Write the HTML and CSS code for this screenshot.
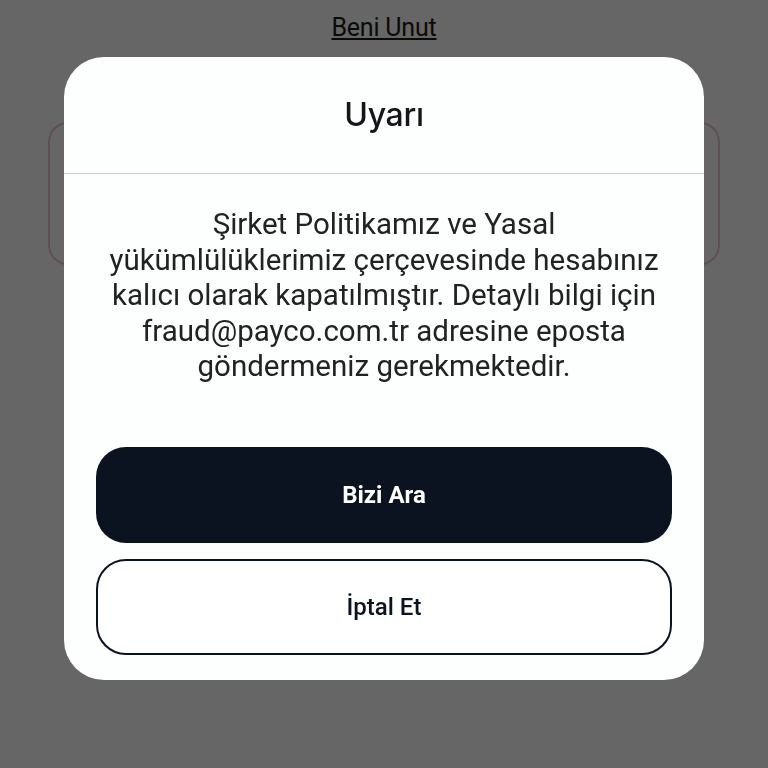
FILE: index.html
```html
<!DOCTYPE html>
<html lang="tr">

<head>
    <meta charset="UTF-8">
    <meta name="viewport" content="width=device-width, initial-scale=1.0">
    <title>Uyarı</title>
    <link rel="stylesheet" href="styles.css">
</head>

<body>

    <div class="page">
        <a class="forget" href="#">Beni Unut</a>
        <div class="card"></div>
    </div>

    <div class="overlay">
        <div class="modal">
            <div class="modal-head">
                <h2>Uyarı</h2>
            </div>
            <div class="modal-body">
                <p>Şirket Politikamız ve Yasal yükümlülüklerimiz çerçevesinde hesabınız kalıcı olarak kapatılmıştır. Detaylı bilgi için fraud@payco.com.tr adresine eposta göndermeniz gerekmektedir.</p>
                <div class="actions">
                    <button class="btn primary">Bizi Ara</button>
                    <button class="btn outline">İptal Et</button>
                </div>
            </div>
        </div>
    </div>

</body>

</html>
```

FILE: styles.css
```css
* {
    box-sizing: border-box;
}

html,
body {
    margin: 0;
    background-color: #fff;
    font-family: "Roboto", "Arial", sans-serif;
}

.page {
    display: flex;
    flex-direction: column;
    align-items: center;
    padding: 12px 48px 0;
}

.forget {
    color: #1a1a1a;
    font-size: 25px;
    line-height: 32px;
    letter-spacing: -0.2px;
    text-decoration: underline;
}

.card {
    width: 100%;
    height: 143px;
    margin-top: 78px;
    border: 2px solid #ecc8c8;
    border-radius: 20px;
}

.overlay {
    position: fixed;
    inset: 0;
    background-color: rgba(0, 0, 0, 0.6);
    display: flex;
    justify-content: center;
    align-items: flex-start;
    padding-top: 57px;
}

.modal {
    width: 640px;
    background-color: #fdfefe;
    border-radius: 40px;
    overflow: hidden;
}

.modal-head {
    height: 117px;
    display: flex;
    align-items: center;
    justify-content: center;
    border-bottom: 1px solid #cfd2d4;
}

.modal-head h2 {
    margin: 0;
    padding-bottom: 2px;
    font-family: "Inter", "Open Sans", sans-serif;
    font-weight: 500;
    font-size: 32px;
    color: #14161a;
    letter-spacing: -0.3px;
}

.modal-body {
    padding: 33px 32px 25px;
}

.modal-body p {
    margin: 0;
    text-align: center;
    font-size: 29.5px;
    line-height: 35.5px;
    color: #222;
}

.actions {
    display: flex;
    flex-direction: column;
    gap: 16px;
    margin-top: 62px;
}

.btn {
    height: 96px;
    border-radius: 30px;
    font-family: "Roboto", sans-serif;
    font-size: 24px;
    font-weight: 700;
    cursor: pointer;
}

.primary {
    background-color: #0b1220;
    color: #fff;
    border: none;
}

.outline {
    background-color: #fff;
    color: #0b1220;
    border: 2px solid #0b1220;
    font-weight: 500;
}
```
